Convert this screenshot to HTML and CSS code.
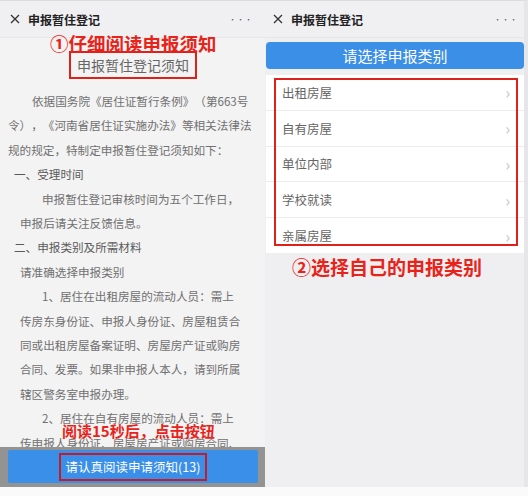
FILE: index.html
```html
<!DOCTYPE html>
<html lang="zh-CN">
<head>
  <meta charset="UTF-8" />
  <title>申报暂住登记</title>
  <link rel="stylesheet" href="styles.css">
</head>
<body>
  <div class="screens">
    <!-- 左：须知页 -->
    <section class="phone phone-notice">
      <header class="bar">
        <svg class="close" width="10" height="10" viewBox="0 0 10 10"><path d="M1 1L9 9M9 1L1 9" stroke="#333" stroke-width="1.3" fill="none"/></svg>
        <span class="bar-title">申报暂住登记</span>
        <span class="more">•••</span>
      </header>

      <div class="notice">
        <h2 class="notice-title">申报暂住登记须知</h2>
        <p class="lead">依据国务院《居住证暂行条例》（第663号令），《河南省居住证实施办法》等相关法律法规的规定，特制定申报暂住登记须知如下：</p>
        <h3 class="sec">一、受理时间</h3>
        <p class="sub">申报暂住登记审核时间为五个工作日，申报后请关注反馈信息。</p>
        <h3 class="sec">二、申报类别及所需材料</h3>
        <p class="note">请准确选择申报类别</p>
        <p class="sub">1、居住在出租房屋的流动人员：需上传房东身份证、申报人身份证、房屋租赁合同或出租房屋备案证明、房屋房产证或购房合同、发票。如果非申报人本人，请到所属辖区警务室申报办理。</p>
        <p class="sub">2、居住在自有房屋的流动人员：需上传申报人身份证、房屋房产证或购房合同、发票。</p>
      </div>

      <div class="read-bar">
        <button class="read-btn"><span class="mark">请认真阅读申请须知(13)</span></button>
      </div>

      <div class="tip tip-1">①仔细阅读申报须知</div>
      <div class="tip tip-3">阅读15秒后，点击按钮</div>
    </section>

    <!-- 右：选择类别 -->
    <section class="phone phone-type">
      <header class="bar">
        <svg class="close" width="10" height="10" viewBox="0 0 10 10"><path d="M1 1L9 9M9 1L1 9" stroke="#333" stroke-width="1.3" fill="none"/></svg>
        <span class="bar-title">申报暂住登记</span>
        <span class="more">•••</span>
      </header>

      <div class="type-head">请选择申报类别</div>
      <ul class="type-list">
        <li>出租房屋<span class="arrow">›</span></li>
        <li>自有房屋<span class="arrow">›</span></li>
        <li>单位内部<span class="arrow">›</span></li>
        <li>学校就读<span class="arrow">›</span></li>
        <li>亲属房屋<span class="arrow">›</span></li>
      </ul>

      <div class="frame"></div>
      <div class="tip tip-2">②选择自己的申报类别</div>
    </section>
  </div>
</body>
</html>
```

FILE: styles.css
```css
body {
  margin: 0;
  background: #fafafa;
  font-family: "Noto Sans CJK SC", "Noto Sans", sans-serif;
  text-spacing-trim: space-all;
}

.screens {
  display: flex;
  width: 528px;
  height: 487px;
  overflow: hidden;
}

.phone {
  position: relative;
  height: 100%;
  overflow: hidden;
  border-top: 1px solid #dcdcdc;
  box-sizing: border-box;
}

.phone-notice {
  width: 265px;
  background: #f3f3f3;
}

.phone-type {
  width: 263px;
  background: #efeef1;
  border-right: 4px solid #e6e5e8;
}

.bar {
  display: flex;
  align-items: center;
  height: 36px;
  padding: 0 12px 0 10px;
  background: #f0eff2;
  border-bottom: 1px solid #e6e6e6;
}

.phone-type .bar {
  padding: 0 6px 0 8px;
}

.close {
  margin-right: 8px;
}

.bar-title {
  font-size: 12px;
  font-weight: bold;
  color: #222;
  flex: 1;
}

.more {
  font-size: 7px;
  color: #555;
  letter-spacing: 1px;
}

/* 须知 */
.notice {
  color: #707070;
  font-size: 11.6px;
  line-height: 24.4px;
}

.notice-title {
  width: 112px;
  margin: 13px 0 10px 69px;
  padding: 0 6px;
  border: 2px solid #e0201a;
  font-size: 14px;
  font-weight: normal;
  line-height: 24px;
  color: #666;
  text-align: center;
}

.notice p, .notice h3 {
  margin: 0;
}

.lead {
  width: 247px;
  margin-left: 8px !important;
  text-indent: 24px;
}

.sec {
  margin-left: 14px !important;
  font-size: 11.6px;
  font-weight: normal;
  color: #5a5a5a;
}

.note {
  margin-left: 20px !important;
}

.sub {
  width: 223px;
  margin-left: 20px !important;
  text-indent: 22px;
}

.read-bar {
  position: absolute;
  left: 0;
  right: 0;
  top: 446px;
  height: 40px;
  padding: 3px 7px 0 8px;
  box-sizing: border-box;
  background: #939393;
}

.read-btn {
  display: flex;
  align-items: center;
  justify-content: center;
  width: 100%;
  height: 33px;
  border: 0;
  border-radius: 2px;
  background: #3a8fe8;
  font-family: inherit;
  font-size: 12.5px;
  color: #fff;
  padding: 0;
}

.mark {
  border: 2px solid #c41d2a;
  padding: 2px 5px;
  line-height: 20px;
}

/* 标注 */
.tip {
  position: absolute;
  color: #e8231a;
  font-weight: bold;
  white-space: nowrap;
}

.tip-1 {
  top: 29px;
  left: 50px;
  font-size: 18.5px;
}

.tip-2 {
  top: 252px;
  left: 27px;
  font-size: 19px;
}

.tip-3 {
  top: 419px;
  left: 62px;
  font-size: 15px;
  text-shadow: 0 0 2px #f3f3f3;
}

/* 类别 */
.type-head {
  margin: 4px 0 0 1px;
  height: 27px;
  line-height: 27px;
  border-radius: 4px;
  background: #3b8fe6;
  color: #fff;
  font-size: 15px;
  text-align: center;
}

.type-list {
  list-style: none;
  margin: 6px 0 0 1px;
  padding: 0;
  background: #fff;
}

.type-list li {
  display: flex;
  justify-content: space-between;
  align-items: center;
  height: 34.8px;
  padding: 0 14px 0 16px;
  border-bottom: 1px solid #ececec;
  font-size: 12.5px;
  color: #666;
}

.type-list li:last-child {
  border-bottom: 0;
}

.arrow {
  color: #c4c4c4;
  font-size: 16px;
}

.frame {
  position: absolute;
  left: 9px;
  top: 77px;
  width: 240px;
  height: 164px;
  border: 2px solid #e0201a;
}
```
